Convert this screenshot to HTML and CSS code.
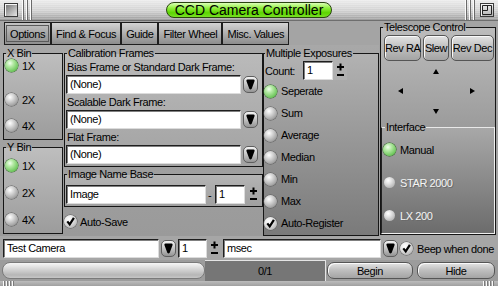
FILE: index.html
```html
<!DOCTYPE html>
<html lang="en">
<head>
    <meta charset="UTF-8">
    <meta name="viewport" content="width=device-width, initial-scale=1.0">
    <title>CCD Camera Controller</title>
    <link rel="stylesheet" href="styles.css">
</head>
<body>
<div class="window">
    <header class="titlebar">
        <div class="tb-side">
            <span class="wbtn"></span>
            <span class="bars"></span>
        </div>
        <div class="title-pill">CCD Camera Controller</div>
        <div class="tb-side right">
            <span class="bars"></span>
            <span class="wbtn max">
                <svg width="12" height="12" viewBox="0 0 12 12"><path d="M1.5 1.5h9v9h-9z M1.5 6.5h5v-5" fill="none" stroke="#222" stroke-width="1"/></svg>
            </span>
        </div>
    </header>

    <div class="main">
        <div class="left">
            <nav class="tabs">
                <div class="tab active"><span>Options</span></div>
                <div class="tab">Find &amp; Focus</div>
                <div class="tab">Guide</div>
                <div class="tab">Filter Wheel</div>
                <div class="tab">Misc. Values</div>
            </nav>

            <div class="page">
                <div class="col bins">
                    <fieldset class="group xbin">
                        <legend>X Bin</legend>
                        <label class="radio on"><i></i>1X</label>
                        <label class="radio"><i></i>2X</label>
                        <label class="radio"><i></i>4X</label>
                    </fieldset>
                    <fieldset class="group ybin">
                        <legend>Y Bin</legend>
                        <label class="radio on"><i></i>1X</label>
                        <label class="radio"><i></i>2X</label>
                        <label class="radio"><i></i>4X</label>
                    </fieldset>
                </div>

                <div class="col calib-col">
                    <fieldset class="group calib">
                        <legend>Calibration Frames</legend>
                        <div class="lbl">Bias Frame or Standard Dark Frame:</div>
                        <div class="combo">
                            <div class="field">(None)</div>
                            <span class="drop"><svg width="9" height="11" viewBox="0 0 9 11"><path d="M1.6 0.5h5.8q1.6 0 1.1 1.8l-2.8 7.4q-1.2 1.6-2.4 0l-2.8-7.4q-0.5-1.8 1.1-1.8z" fill="#000"/></svg></span>
                        </div>
                        <div class="lbl">Scalable Dark Frame:</div>
                        <div class="combo">
                            <div class="field">(None)</div>
                            <span class="drop"><svg width="9" height="11" viewBox="0 0 9 11"><path d="M1.6 0.5h5.8q1.6 0 1.1 1.8l-2.8 7.4q-1.2 1.6-2.4 0l-2.8-7.4q-0.5-1.8 1.1-1.8z" fill="#000"/></svg></span>
                        </div>
                        <div class="lbl">Flat Frame:</div>
                        <div class="combo">
                            <div class="field">(None)</div>
                            <span class="drop"><svg width="9" height="11" viewBox="0 0 9 11"><path d="M1.6 0.5h5.8q1.6 0 1.1 1.8l-2.8 7.4q-1.2 1.6-2.4 0l-2.8-7.4q-0.5-1.8 1.1-1.8z" fill="#000"/></svg></span>
                        </div>
                    </fieldset>

                    <fieldset class="group namebase">
                        <legend>Image Name Base</legend>
                        <div class="name-row">
                            <div class="field grow">Image</div>
                            <span class="dash">-</span>
                            <div class="field num">1</div>
                            <svg class="pm" width="7" height="16" viewBox="0 0 7 16"><path d="M0 4h7M3.5 0.5v7M0 12h7" stroke="#000" stroke-width="2"/></svg>
                        </div>
                    </fieldset>

                    <label class="check autosave">
                        <i><svg width="13" height="13" viewBox="0 0 13 13"><path d="M3.3 6.4l2.4 3 4.2-6.6" fill="none" stroke="#000" stroke-width="2.2"/></svg></i>Auto-Save
                    </label>
                </div>

                <fieldset class="group multi">
                    <legend>Multiple Exposures</legend>
                    <div class="count-row">
                        <span>Count:</span>
                        <div class="field num">1</div>
                        <span class="pm-box"><svg width="7" height="16" viewBox="0 0 7 16"><path d="M0 4h7M3.5 0.5v7M0 12h7" stroke="#000" stroke-width="2"/></svg></span>
                    </div>
                    <label class="radio on"><i></i>Seperate</label>
                    <label class="radio"><i></i>Sum</label>
                    <label class="radio"><i></i>Average</label>
                    <label class="radio"><i></i>Median</label>
                    <label class="radio"><i></i>Min</label>
                    <label class="radio"><i></i>Max</label>
                    <label class="check">
                        <i><svg width="13" height="13" viewBox="0 0 13 13"><path d="M3.3 6.4l2.4 3 4.2-6.6" fill="none" stroke="#000" stroke-width="2.2"/></svg></i>Auto-Register
                    </label>
                </fieldset>
            </div>
        </div>

        <fieldset class="group scope">
            <legend>Telescope Control</legend>
            <div class="scope-btns">
                <button class="btn ra">Rev RA</button>
                <button class="btn slew">Slew</button>
                <button class="btn dec">Rev Dec</button>
            </div>
            <div class="pad">
                <span class="arr up"></span>
                <span class="arr lt"></span>
                <span class="arr rt"></span>
                <span class="arr dn"></span>
            </div>
            <fieldset class="group iface">
                <legend>Interface</legend>
                <label class="radio on"><i></i>Manual</label>
                <label class="radio off"><i></i>STAR 2000</label>
                <label class="radio off"><i></i>LX 200</label>
            </fieldset>
        </fieldset>
    </div>

    <div class="controls">
        <div class="field camera">Test Camera</div>
        <span class="drop"><svg width="9" height="11" viewBox="0 0 9 11"><path d="M1.6 0.5h5.8q1.6 0 1.1 1.8l-2.8 7.4q-1.2 1.6-2.4 0l-2.8-7.4q-0.5-1.8 1.1-1.8z" fill="#000"/></svg></span>
        <div class="field num exp">1</div>
        <svg class="pm" width="7" height="16" viewBox="0 0 7 16"><path d="M0 4h7M3.5 0.5v7M0 12h7" stroke="#000" stroke-width="2"/></svg>
        <div class="field unit">msec</div>
        <span class="drop"><svg width="9" height="11" viewBox="0 0 9 11"><path d="M1.6 0.5h5.8q1.6 0 1.1 1.8l-2.8 7.4q-1.2 1.6-2.4 0l-2.8-7.4q-0.5-1.8 1.1-1.8z" fill="#000"/></svg></span>
        <label class="check beep">
            <i><svg width="13" height="13" viewBox="0 0 13 13"><path d="M3.3 6.4l2.4 3 4.2-6.6" fill="none" stroke="#000" stroke-width="2.2"/></svg></i>Beep when done
        </label>
    </div>

    <div class="status">
        <div class="progress"></div>
        <div class="counter">0/1</div>
        <button class="btn wide begin">Begin</button>
        <button class="btn wide hide">Hide</button>
    </div>

    <footer class="edge">
        <span class="ticks"></span>
        <span class="ticks"></span>
    </footer>
</div>
</body>
</html>
```

FILE: styles.css
```css
* {
    margin: 0;
    padding: 0;
    box-sizing: border-box;
}
body {
    background: #9e9e9e;
    font-family: "Liberation Sans", Arial, sans-serif;
    font-size: 11px;
    letter-spacing: -0.4px;
    color: #000;
}
button {
    font: inherit;
    letter-spacing: inherit;
    color: #000;
    white-space: nowrap;
}
.window {
    width: 498px;
    height: 286px;
    overflow: hidden;
    display: flex;
    flex-direction: column;
    background: #a4a4a4;
}

/* title bar */
.titlebar {
    height: 21px;
    flex: none;
    display: grid;
    grid-template-columns: 1fr auto 1fr;
    align-items: center;
    background:
        repeating-linear-gradient(rgba(255,255,255,0.2) 0 1px, transparent 1px 2px),
        linear-gradient(#ececec, #d0d0d0 55%, #9c9c9c);
    border-bottom: 1px solid #6e6e6e;
}
.tb-side {
    display: flex;
    align-items: center;
    height: 100%;
}
.tb-side.right {
    justify-content: flex-end;
}
.wbtn {
    width: 14px;
    height: 14px;
    margin: 0 4px;
    border: 1px solid #3a3a3a;
    background: linear-gradient(135deg, #6e6e6e, #e6e6e6);
    box-shadow: inset 1px 1px 0 #f6f6f6;
}
.wbtn.max {
    margin: 0 4px 0 5px;
    background: linear-gradient(#eeeeee, #b4b4b4);
    display: flex;
}
.bars {
    width: 10px;
    height: 100%;
    background: repeating-linear-gradient(90deg, #fbfbfb 0 1px, #6a6a6a 1px 2px, transparent 2px 4px);
}
.title-pill {
    width: 166px;
    height: 16px;
    border-radius: 8px;
    border: 1px solid #2a4410;
    background: linear-gradient(#dcffb8, #92f040 35%, #5cd400 70%, #78e024);
    font-size: 14px;
    letter-spacing: 0;
    line-height: 14px;
    text-align: center;
}

/* main area */
.main {
    height: 215px;
    flex: none;
    display: grid;
    grid-template-columns: 379px 119px;
}
.left {
    display: flex;
    flex-direction: column;
}
.tabs {
    height: 24px;
    display: flex;
    padding: 1px 0 0 4px;
}
.tab {
    height: 23px;
    padding: 0 4px;
    display: flex;
    align-items: center;
    border: 1px solid #1e1e1e;
    background: linear-gradient(#d4d4d4, #a8a8a8 60%, #8c8c8c);
}
.tab.active {
    padding: 2px 1px;
    background: linear-gradient(#c4c4c4, #a0a0a0 60%, #909090);
}
.tab.active span {
    height: 100%;
    display: flex;
    align-items: center;
    padding: 0 3px;
    border: 1px solid #5a5a5a;
}
.page {
    flex: 1;
    display: grid;
    grid-template-columns: 60px 200px 116px;
    padding: 2px 0 0 3px;
    background: linear-gradient(#a8a8a8, #9a9a9a);
}
.col {
    display: flex;
    flex-direction: column;
}

/* group boxes */
.group {
    border: 1px solid #161616;
    padding: 0 1px 1px;
    min-width: 0;
    display: flex;
    flex-direction: column;
    background: linear-gradient(#bebebe, #9c9c9c);
}
.group legend {
    margin-left: 1px;
    padding: 0 1px;
    line-height: 12px;
}

/* radios and checks */
.radio, .check {
    display: flex;
    align-items: center;
    gap: 4px;
    height: 13px;
}
.radio i, .check i {
    flex: none;
    width: 13px;
    height: 13px;
    border-radius: 50%;
    background: radial-gradient(circle at 38% 32%, #ffffff 0, #e2e2e2 22%, #aaaaaa 65%, #6e6e6e 100%);
    box-shadow: 0 0 0 0.5px #5a5a5a;
}
.radio.on i {
    background: radial-gradient(circle at 38% 32%, #f2fff0 0, #b6eaa6 28%, #6cc65a 72%, #3a8a2e 100%);
    box-shadow: 0 0 0 0.5px #2e6a24;
}
.check i {
    display: flex;
    background: radial-gradient(circle at 38% 32%, #ffffff 0, #ececec 30%, #b4b4b4 80%, #7a7a7a 100%);
}
.radio.off {
    color: #f4f4f4;
    text-shadow: 1px 1px 0 #6a6a6a;
}
.radio.off i {
    width: 11px;
    height: 11px;
    margin: 0 1px;
    background: radial-gradient(circle at 38% 32%, #ffffff 0, #e4e4e4 30%, #b2b2b2 80%, #8a8a8a 100%);
    box-shadow: none;
}

/* binning */
.bins {
    gap: 1px;
}
.xbin, .ybin {
    height: 93px;
    padding-left: 1px;
}
.xbin .radio:nth-of-type(1) {
    margin-bottom: 21px;
}
.xbin .radio:nth-of-type(3) {
    margin-top: 13px;
}
.ybin {
    padding-top: 6px;
    gap: 14px;
}

/* calibration */
.calib-col {
    padding-left: 1px;
}
.calib {
    padding: 0 1px 2px;
    background: linear-gradient(#bababa, #a2a2a2);
}
.lbl {
    line-height: 15px;
    margin-top: 1px;
    padding-left: 1px;
}
.combo {
    display: flex;
    align-items: center;
    gap: 2px;
    height: 19px;
    padding-right: 3px;
}
.combo .field {
    flex: 1;
}
.field {
    height: 19px;
    padding: 0 3px;
    line-height: 17px;
    background: #fff;
    border: 1px solid;
    border-color: #1e1e1e #dcdcdc #dcdcdc #1e1e1e;
    box-shadow: inset 1px 1px 0 #808080;
    white-space: nowrap;
}
.drop {
    flex: none;
    width: 15px;
    height: 17px;
    border-radius: 5px;
    border: 1px solid #5e5e5e;
    background: linear-gradient(#f4f4f4, #c4c4c4 50%, #949494);
    display: flex;
    align-items: center;
    justify-content: center;
}
.namebase {
    margin-top: 1px;
    padding: 5px 1px 2px;
    background: linear-gradient(#b4b4b4, #a0a0a0);
}
.name-row {
    display: flex;
    align-items: center;
    gap: 2px;
    padding-right: 4px;
}
.grow {
    flex: 1;
}
.dash {
    width: 5px;
}
.num {
    width: 30px;
}
.pm {
    flex: none;
    margin-left: 3px;
}
.autosave {
    flex: 1;
    height: auto;
    gap: 3px;
}

/* multiple exposures */
.multi {
    padding: 0 1px 1px 0;
    background: linear-gradient(#b2b2b2, #7a7a7a);
}
.count-row {
    display: flex;
    align-items: center;
    height: 19px;
    margin: 2px 0 0 1px;
}
.count-row .num {
    margin-left: 8px;
}
.pm-box {
    width: 14px;
    height: 19px;
    display: flex;
    align-items: center;
    justify-content: center;
    background: #b0b0b0;
}
.multi .radio, .multi .check {
    height: 22px;
}

/* telescope */
.scope {
    margin: 0 2px 1px 1px;
    padding: 0;
    background: linear-gradient(#bcbcbc, #9a9a9a 50%, #8a8a8a);
}
.scope legend {
    margin-left: 2px;
}
.scope-btns {
    display: flex;
    gap: 2px;
    margin: 2px 0 0 3px;
}
.btn {
    flex: none;
    height: 26px;
    padding: 0;
    border: 1px solid #555;
    border-radius: 5px;
    background: linear-gradient(#e4e4e4, #c0c0c0 45%, #a4a4a4);
    box-shadow: inset 1px 1px 0 #fafafa;
}
.ra { width: 37px; }
.slew { width: 26px; }
.dec { width: 43px; }
.pad {
    display: grid;
    grid-template-columns: repeat(3, 36px);
    grid-template-rows: repeat(3, 20px);
    grid-template-areas: ". up ." "lt . rt" ". dn .";
    place-items: center;
    margin-left: 1px;
}
.arr {
    width: 0;
    height: 0;
    border: 3px solid transparent;
}
.arr.up { grid-area: up; border-bottom: 5px solid #000; border-top-width: 0; }
.arr.dn { grid-area: dn; border-top: 5px solid #000; border-bottom-width: 0; }
.arr.lt { grid-area: lt; border-right: 5px solid #000; border-left-width: 0; }
.arr.rt { grid-area: rt; border-left: 5px solid #000; border-right-width: 0; }
.iface {
    flex: 1;
    border-color: #e8e8e8 #f0f0f0 #f0f0f0 #222;
    background: linear-gradient(#a8a8a8, #6c6c6c);
    padding: 0 1px 1px;
}
.iface legend {
    margin-left: 2px;
}
.iface .radio {
    flex: 1;
    height: auto;
}

/* bottom controls */
.controls {
    height: 24px;
    flex: none;
    display: flex;
    align-items: center;
    padding: 1px 0 0 3px;
    background: #a6a6a6;
}
.camera {
    width: 156px;
    margin-right: 2px;
}
.exp {
    width: 29px;
    margin-left: 2px;
}
.controls .pm {
    margin: 0 5px 0 4px;
}
.unit {
    width: 158px;
    margin-right: 2px;
}
.beep {
    margin-left: 2px;
    gap: 4px;
}

/* status row */
.status {
    height: 21px;
    flex: none;
    display: flex;
    align-items: center;
    background: #9c9c9c;
}
.progress {
    width: 203px;
    height: 17px;
    margin-left: 2px;
    border-radius: 8px;
    border: 1px solid #7a7a7a;
    background: linear-gradient(#f6f6f6, #d6d6d6 40%, #b6b6b6 80%, #c6c6c6);
}
.counter {
    width: 121px;
    height: 100%;
    display: flex;
    align-items: center;
    justify-content: center;
    background: #767676;
    border-top: 1px solid #e4e4e4;
    border-right: 1px solid #e4e4e4;
}
.btn.wide {
    height: 17px;
    border-radius: 7px;
}
.begin {
    width: 86px;
    margin-left: 1px;
}
.hide {
    width: 78px;
    margin-left: 4px;
}

.edge {
    flex: 1;
    display: flex;
    justify-content: space-between;
    padding: 0 3px;
    background: linear-gradient(#bcbcbc, #a0a0a0);
}
.ticks {
    width: 12px;
    background: repeating-linear-gradient(90deg, #fafafa 0 1px, #7a7a7a 1px 2px, transparent 2px 3px);
}
```
